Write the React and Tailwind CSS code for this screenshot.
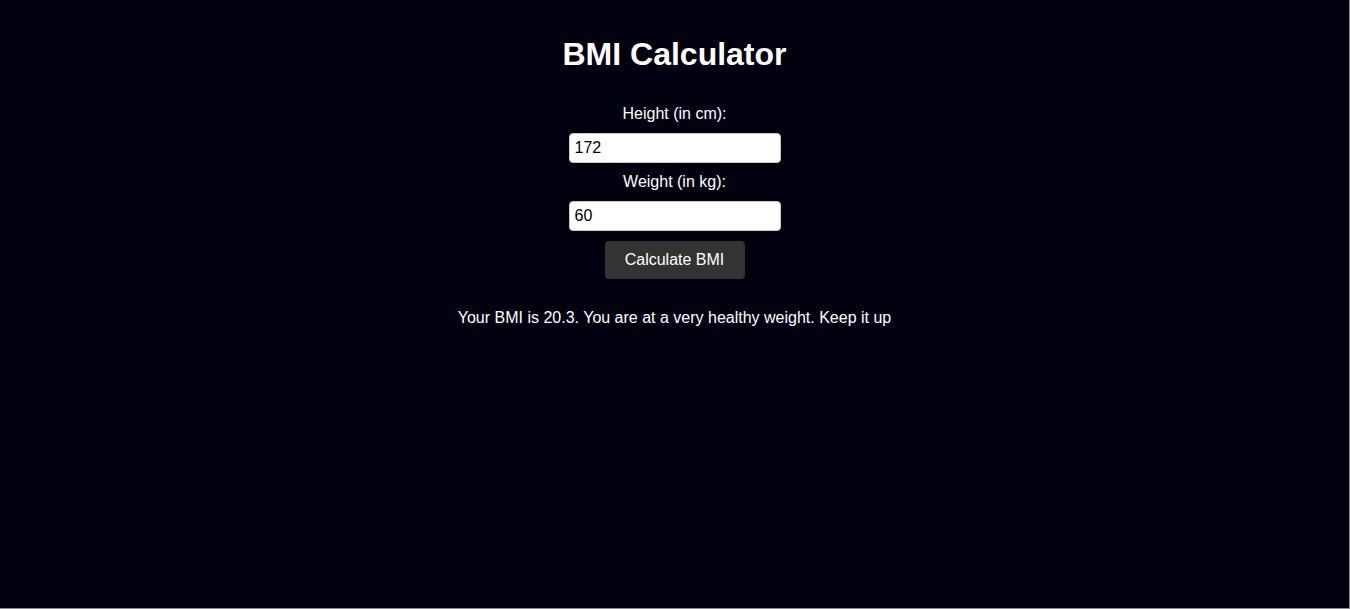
import React, { useState } from 'react';

export default function App() {
  const [height, setHeight] = useState('172');
  const [weight, setWeight] = useState('60');
  const [result, setResult] = useState('Your BMI is 20.3. You are at a very healthy weight. Keep it up');

  function calcular() {
    const h = parseFloat(height) / 100;
    const w = parseFloat(weight);
    if (!h || !w) return;
    const bmi = (w / (h * h)).toFixed(1);
    setResult(`Your BMI is ${bmi}. You are at a very healthy weight. Keep it up`);
  }

  return (
    <div
      className="h-[609px] w-full bg-[#02010f] text-white border-r border-b border-[#8c8c8c] flex flex-col items-center"
      style={{ fontFamily: '"Liberation Sans", Arial, sans-serif' }}
    >
      <h1 className="mt-[36px] text-[32px] leading-[37px] font-bold">BMI Calculator</h1>

      {/* Formulario */}
      <label className="mt-[32px] text-base leading-[18px]">Height (in cm):</label>
      <input
        type="text"
        value={height}
        onChange={(e) => setHeight(e.target.value)}
        className="mt-[10px] w-[212px] h-[30px] px-[5px] text-base text-black bg-white rounded-[4px] border border-[#c8c8c8] outline-none"
      />
      <label className="mt-[10px] text-base leading-[18px]">Weight (in kg):</label>
      <input
        type="text"
        value={weight}
        onChange={(e) => setWeight(e.target.value)}
        className="mt-[10px] w-[212px] h-[30px] px-[5px] text-base text-black bg-white rounded-[4px] border border-[#c8c8c8] outline-none"
      />
      <button
        type="button"
        onClick={calcular}
        className="mt-[10px] w-[140px] h-[38px] bg-[#333333] rounded-[4px] text-base text-white"
      >
        Calculate BMI
      </button>

      <p className="mt-[30px] text-base leading-[18px]">{result}</p>
    </div>
  );
}
